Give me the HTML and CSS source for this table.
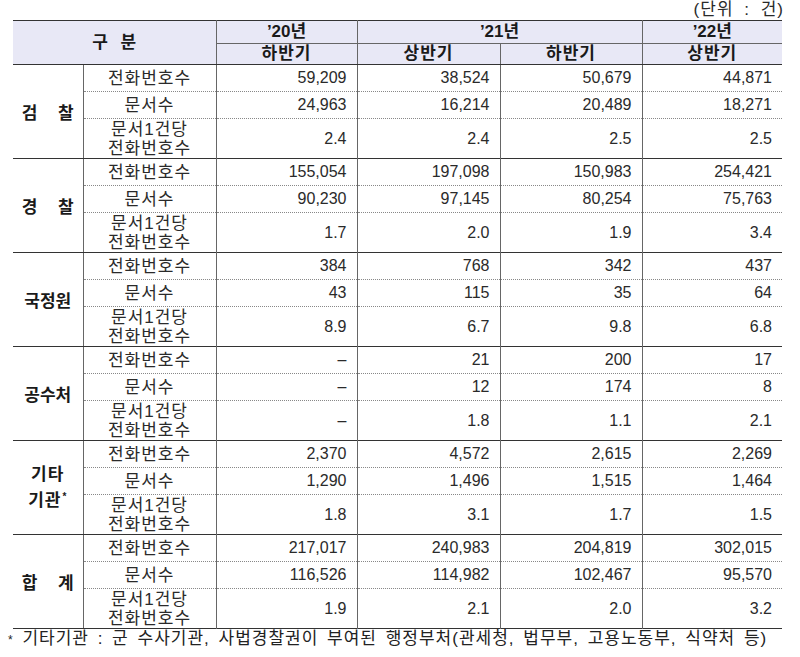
FILE: index.html
```html
<!DOCTYPE html>
<html lang="ko">
<head>
<meta charset="utf-8">
<link rel="stylesheet" href="styles.css">
</head>
<body>
<div class="wrap">
  <div class="unit">(단위 : 건)</div>
  <table class="tbl">
    <colgroup>
      <col class="c-group"><col class="c-item"><col class="c-num"><col class="c-num"><col class="c-num"><col class="c-num">
    </colgroup>
    <thead>
      <tr class="h1">
        <th colspan="2" rowspan="2" class="gubun">구 분</th>
        <th>’20년</th>
        <th colspan="2">’21년</th>
        <th>’22년</th>
      </tr>
      <tr class="h2">
        <th>하반기</th><th>상반기</th><th>하반기</th><th>상반기</th>
      </tr>
    </thead>
    <tbody>
      <tr class="r1"><td rowspan="3" class="grp wide">검 찰</td><td class="item">전화번호수</td><td class="num">59,209</td><td class="num">38,524</td><td class="num">50,679</td><td class="num">44,871</td></tr>
      <tr class="r2"><td class="item">문서수</td><td class="num">24,963</td><td class="num">16,214</td><td class="num">20,489</td><td class="num">18,271</td></tr>
      <tr class="r3"><td class="item">문서1건당<br>전화번호수</td><td class="num">2.4</td><td class="num">2.4</td><td class="num">2.5</td><td class="num">2.5</td></tr>

      <tr class="r1"><td rowspan="3" class="grp wide">경 찰</td><td class="item">전화번호수</td><td class="num">155,054</td><td class="num">197,098</td><td class="num">150,983</td><td class="num">254,421</td></tr>
      <tr class="r2"><td class="item">문서수</td><td class="num">90,230</td><td class="num">97,145</td><td class="num">80,254</td><td class="num">75,763</td></tr>
      <tr class="r3"><td class="item">문서1건당<br>전화번호수</td><td class="num">1.7</td><td class="num">2.0</td><td class="num">1.9</td><td class="num">3.4</td></tr>

      <tr class="r1"><td rowspan="3" class="grp">국정원</td><td class="item">전화번호수</td><td class="num">384</td><td class="num">768</td><td class="num">342</td><td class="num">437</td></tr>
      <tr class="r2"><td class="item">문서수</td><td class="num">43</td><td class="num">115</td><td class="num">35</td><td class="num">64</td></tr>
      <tr class="r3"><td class="item">문서1건당<br>전화번호수</td><td class="num">8.9</td><td class="num">6.7</td><td class="num">9.8</td><td class="num">6.8</td></tr>

      <tr class="r1"><td rowspan="3" class="grp">공수처</td><td class="item">전화번호수</td><td class="num">–</td><td class="num">21</td><td class="num">200</td><td class="num">17</td></tr>
      <tr class="r2"><td class="item">문서수</td><td class="num">–</td><td class="num">12</td><td class="num">174</td><td class="num">8</td></tr>
      <tr class="r3"><td class="item">문서1건당<br>전화번호수</td><td class="num">–</td><td class="num">1.8</td><td class="num">1.1</td><td class="num">2.1</td></tr>

      <tr class="r1"><td rowspan="3" class="grp two">기타<br>기관<span class="ast">*</span></td><td class="item">전화번호수</td><td class="num">2,370</td><td class="num">4,572</td><td class="num">2,615</td><td class="num">2,269</td></tr>
      <tr class="r2"><td class="item">문서수</td><td class="num">1,290</td><td class="num">1,496</td><td class="num">1,515</td><td class="num">1,464</td></tr>
      <tr class="r3"><td class="item">문서1건당<br>전화번호수</td><td class="num">1.8</td><td class="num">3.1</td><td class="num">1.7</td><td class="num">1.5</td></tr>

      <tr class="r1"><td rowspan="3" class="grp wide">합 계</td><td class="item">전화번호수</td><td class="num">217,017</td><td class="num">240,983</td><td class="num">204,819</td><td class="num">302,015</td></tr>
      <tr class="r2"><td class="item">문서수</td><td class="num">116,526</td><td class="num">114,982</td><td class="num">102,467</td><td class="num">95,570</td></tr>
      <tr class="r3"><td class="item">문서1건당<br>전화번호수</td><td class="num">1.9</td><td class="num">2.1</td><td class="num">2.0</td><td class="num">3.2</td></tr>
    </tbody>
  </table>
  <div class="note"><span class="star">*</span> 기타기관 : 군 수사기관, 사법경찰권이 부여된 행정부처(관세청, 법무부, 고용노동부, 식약처 등)</div>
</div>
</body>
</html>
```

FILE: styles.css
```css
html, body {
  margin: 0;
  padding: 0;
  background: #ffffff;
}
body {
  font-family: "Liberation Sans", "Noto Sans CJK KR", sans-serif;
  color: #222222;
  font-size: 16px;
}
.wrap {
  width: 769px;
  margin-left: 13px;
}
.unit {
  height: 20px;
  line-height: 20px;
  text-align: right;
  font-size: 17px;
  letter-spacing: 1px;
  word-spacing: 5px;
  margin-right: -2px;
  color: #2a2a2a;
}
.tbl {
  width: 769px;
  border-collapse: collapse;
  table-layout: fixed;
  border-top: 1px solid #333333;
  border-bottom: 1px solid #333333;
}
.c-group { width: 70px; }
.c-item { width: 133px; }
.tbl col.c-num:nth-child(3) { width: 141px; }
.tbl col.c-num:nth-child(4) { width: 143px; }
.tbl col.c-num:nth-child(5) { width: 142px; }
.tbl col.c-num:nth-child(6) { width: 140px; }

.tbl th {
  background: #e8e8f6;
  font-weight: bold;
  font-size: 17px;
  color: #1a1a1a;
  padding: 0;
  border-left: 1px solid #666666;
  border-right: 1px solid #666666;
  line-height: 18px;
}
.tbl th:first-child { border-left: none; }
.tbl .h1 th { height: 22px; border-bottom: 1px solid #666666; }
.tbl .h1 th:last-child { border-right: none; }
.tbl .h2 th { height: 20px; border-bottom: 1px solid #333333; letter-spacing: 1px; }
.tbl .h2 th:last-child { border-right: none; }
.tbl th.gubun { word-spacing: 8px; border-bottom: 1px solid #333333; }

.tbl td {
  padding: 0;
  border-left: 1px solid #666666;
  border-right: 1px solid #666666;
  vertical-align: middle;
}
.tbl td:last-child { border-right: none; }
.tbl td.grp {
  border-left: none;
  text-align: center;
  font-weight: bold;
  font-size: 17px;
  color: #1a1a1a;
  border-bottom: 1px solid #333333;
  white-space: nowrap;
}
.tbl td.grp.wide { word-spacing: 16px; }
.tbl td.grp.two { line-height: 22px; letter-spacing: 1px; }
.ast {
  font-size: 10px;
  vertical-align: 6px;
  margin-left: 1px;
}
.tbl .r1 td { height: 26px; border-top: 1px solid #333333; }
.tbl .r2 td { height: 26px; border-top: 1px dotted #888888; }
.tbl .r3 td { height: 39px; border-top: 1px dotted #888888; }
.tbl td.item {
  text-align: center;
  font-size: 17px;
  letter-spacing: 1px;
  line-height: 19px;
  color: #2a2a2a;
}
.tbl td.num {
  text-align: right;
  padding-right: 10px;
  color: #2a2a2a;
}
.note {
  margin-left: -5px;
  line-height: 20px;
  font-size: 17px;
  letter-spacing: 1px;
  word-spacing: 3px;
  white-space: nowrap;
  color: #222222;
}
.note .star {
  font-size: 12px;
}
```
